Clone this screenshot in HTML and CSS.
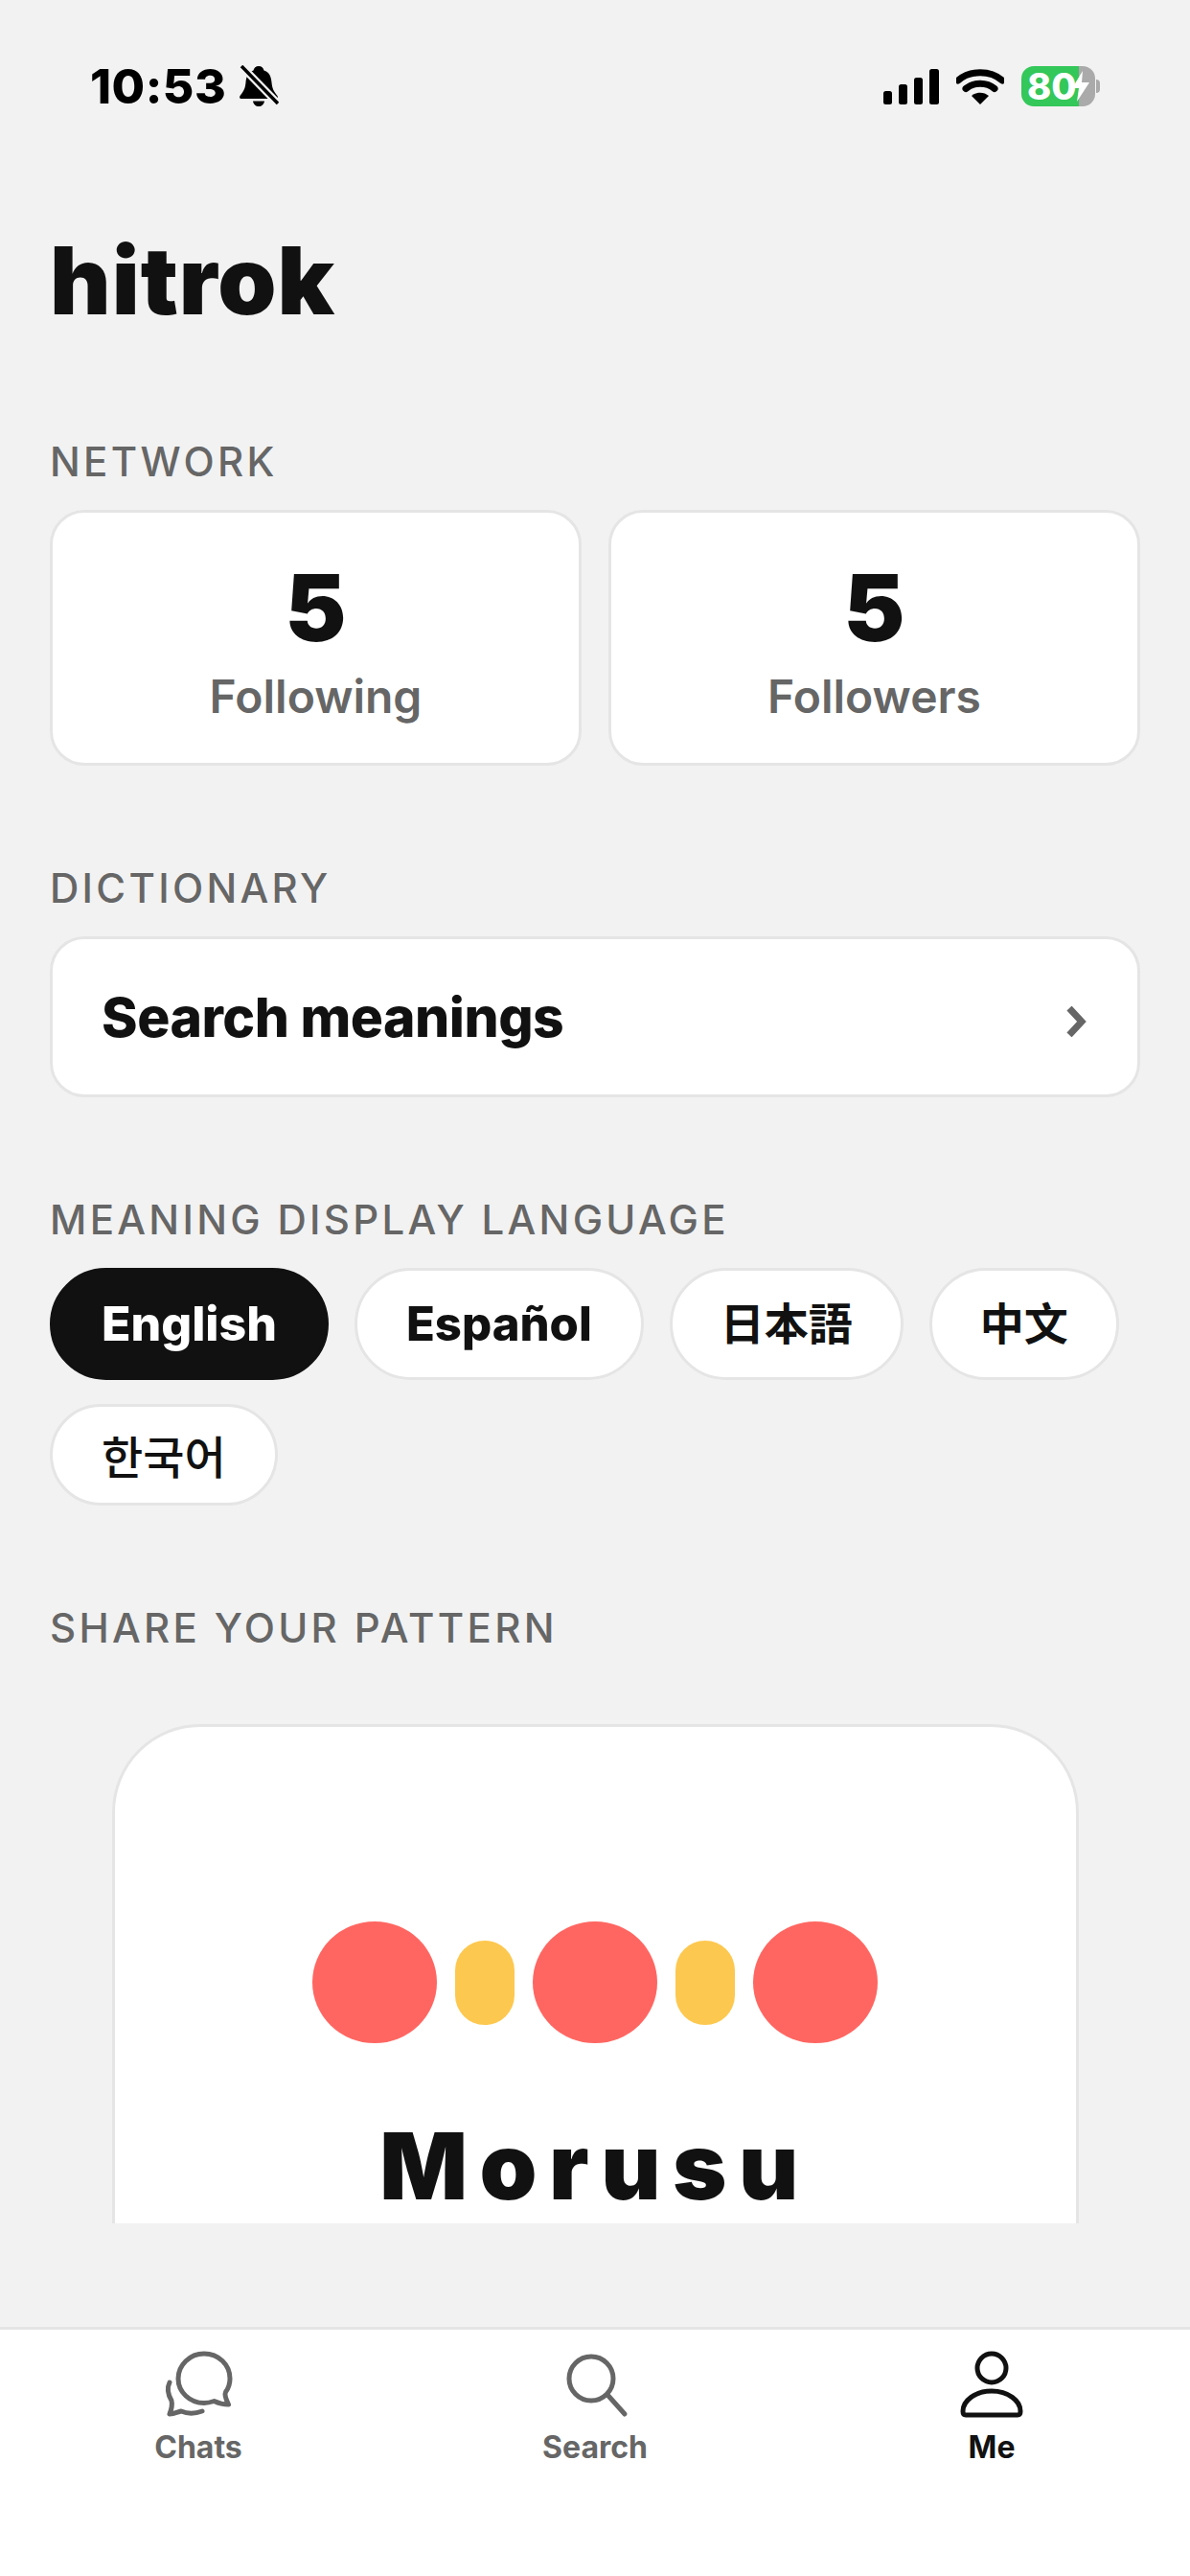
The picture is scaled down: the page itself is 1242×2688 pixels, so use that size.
FILE: index.html
```html
<!DOCTYPE html>
<html lang="en">
<head>
    <meta charset="UTF-8">
    <meta name="viewport" content="width=device-width, initial-scale=1.0">
    <title>hitrok</title>
    <link rel="stylesheet" href="styles.css">
</head>
<body>
    <div class="page">
        <div class="content">
            <div class="status-bar">
                <div class="status-left">
                    <span class="time">10:53</span>
                    <svg class="bell" width="42" height="44" viewBox="0 0 42 44">
                        <path d="M21 1c3 0 5 2 5.500 4.500C32 7 34 12 34.500 18c.5 6 2 9 6 14 1 2 0 3-2 3H3.500c-2 0-3-1-2-3 4-5 5.500-8 6-14C8 12 10 7 15.500 5.500 16 3 18 1 21 1z" fill="#000"/>
                        <path d="M15 37.500h12c-.5 3.500-3 5.500-6 5.500s-5.500-2-6-5.500z" fill="#000"/>
                        <path d="M2 0L42 41" stroke="#f2f2f2" stroke-width="8"/>
                        <path d="M3 1L41 40" stroke="#000" stroke-width="3.500"/>
                    </svg>
                </div>
                <div class="status-right">
                    <svg width="58" height="37" viewBox="0 0 58 37">
                        <rect x="0" y="23" width="9" height="14" rx="2.500" fill="#000"/>
                        <rect x="16" y="16" width="9" height="21" rx="2.500" fill="#000"/>
                        <rect x="32" y="9" width="9" height="28" rx="2.500" fill="#000"/>
                        <rect x="48" y="0" width="10" height="37" rx="2.500" fill="#000"/>
                    </svg>
                    <svg width="50" height="37" viewBox="0 0 50 37">
                        <path d="M2 12C14 1 36 1 48 12" fill="none" stroke="#000" stroke-width="7" stroke-linecap="round"/>
                        <path d="M10 20.500C18 13.500 32 13.500 40 20.500" fill="none" stroke="#000" stroke-width="7" stroke-linecap="round"/>
                        <path d="M16 28c5-4.500 13-4.500 18 0L25 37z" fill="#000"/>
                    </svg>
                    <div class="battery">
                        <div class="battery-body">
                            <span class="battery-text">80</span>
                            <svg class="battery-bolt" width="18" height="32" viewBox="0 0 18 32">
                                <path d="M11 0L0 18h7L5 32 18 12h-8z" fill="#fff"/>
                            </svg>
                        </div>
                        <div class="battery-nub"></div>
                    </div>
                </div>
            </div>

            <h1 class="title">hitrok</h1>

            <section class="section">
                <h2 class="section-label">NETWORK</h2>
                <div class="stats">
                    <div class="card stat">
                        <div class="stat-number">5</div>
                        <div class="stat-label">Following</div>
                    </div>
                    <div class="card stat">
                        <div class="stat-number">5</div>
                        <div class="stat-label">Followers</div>
                    </div>
                </div>
            </section>

            <section class="section">
                <h2 class="section-label">DICTIONARY</h2>
                <div class="card link-row">
                    <span class="link-text">Search meanings</span>
                    <svg class="chevron" width="24" height="32" viewBox="0 0 24 32">
                        <path d="M4 2L17 16 4 30" fill="none" stroke="#666" stroke-width="7"/>
                    </svg>
                </div>
            </section>

            <section class="section">
                <h2 class="section-label">MEANING DISPLAY LANGUAGE</h2>
                <div class="pills">
                    <div class="pill pill-active">English</div>
                    <div class="pill">Español</div>
                    <div class="pill pill-cjk" lang="ja">日本語</div>
                    <div class="pill pill-cjk" lang="zh">中文</div>
                    <div class="pill pill-ko" lang="ko">한국어</div>
                </div>
            </section>

            <section class="section">
                <h2 class="section-label">SHARE YOUR PATTERN</h2>
                <div class="share-card">
                    <div class="pattern">
                        <div class="dot"></div>
                        <div class="dash"></div>
                        <div class="dot"></div>
                        <div class="dash"></div>
                        <div class="dot"></div>
                    </div>
                    <div class="brand">Morusu</div>
                </div>
            </section>
        </div>

        <nav class="tabbar">
            <div class="tab">
                <svg width="100" height="100" viewBox="0 0 100 100">
                    <g transform="translate(3 0)">
                        <path d="M53 16c15 0 27 11.500 27 26 0 5-1.500 10-4.500 14-1 2 0 7 3 13-6 0-11-1.500-15-3.500-3 1-6.500 2-10.500 2-15 0-27-11.500-27-25.500S38 16 53 16z" fill="none" stroke="#666" stroke-width="5" stroke-linejoin="round"/>
                        <path d="M17 46c-3 6-2 12 2 19 1 4 0 9-2 14 5 0 8-2 12-3 7 3 14 3 22 0" fill="none" stroke="#666" stroke-width="5" stroke-linecap="round" stroke-linejoin="round"/>
                    </g>
                </svg>
                <span class="tab-label">Chats</span>
            </div>
            <div class="tab">
                <svg width="100" height="100" viewBox="0 0 100 100">
                    <circle cx="46" cy="42" r="23" fill="none" stroke="#666" stroke-width="5"/>
                    <path d="M64 60L81 79" fill="none" stroke="#666" stroke-width="5" stroke-linecap="round"/>
                </svg>
                <span class="tab-label">Search</span>
            </div>
            <div class="tab tab-active">
                <svg width="100" height="100" viewBox="0 0 100 100">
                    <ellipse cx="50" cy="31" rx="15" ry="15" fill="none" stroke="#111" stroke-width="5"/>
                    <path d="M20 76c0-11 13-21 30-21s30 10 30 21c0 3-1 4-3 4H23c-2 0-3-1-3-4z" fill="none" stroke="#111" stroke-width="5" stroke-linejoin="round"/>
                </svg>
                <span class="tab-label">Me</span>
            </div>
        </nav>
    </div>
</body>
</html>
```

FILE: styles.css
```css
* {
    box-sizing: border-box;
}

body {
    margin: 0;
    background-color: #f2f2f2;
    color: #111;
    font-family: 'Inter', 'Noto Sans CJK JP', sans-serif;
}

.page {
    display: flex;
    flex-direction: column;
    height: 2688px;
    overflow: hidden;
}

.content {
    flex: none;
    height: 2320px;
    overflow: hidden;
    padding: 0 52px;
}

.status-bar {
    display: flex;
    justify-content: space-between;
    align-items: center;
    height: 44px;
    margin-top: 68px;
    padding: 0 42px;
}

.status-left {
    display: flex;
    align-items: center;
    gap: 13px;
}

.status-right {
    display: flex;
    align-items: center;
    gap: 18px;
}

.time {
    font-size: 50px;
    font-weight: 800;
    line-height: 44px;
    letter-spacing: 0.5px;
    color: #000;
}

.battery {
    display: flex;
    align-items: center;
    gap: 1px;
}

.battery-body {
    display: flex;
    align-items: center;
    width: 77px;
    height: 42px;
    border-radius: 13px;
    padding-left: 6px;
    background: linear-gradient(to right, #34c759 60px, #aaa 60px);
}

.battery-text {
    color: #fff;
    font-size: 38px;
    font-weight: 800;
    line-height: 42px;
    width: 46px;
}

.battery-bolt {
    flex: none;
    margin-left: 1px;
}

.battery-nub {
    width: 4px;
    height: 14px;
    border-radius: 0 4px 4px 0;
    background-color: #aaa;
}

.title {
    margin: 126px 0 0;
    font-size: 98px;
    font-weight: 900;
    line-height: 110px;
    letter-spacing: 1px;
}

.section {
    margin-top: 104px;
}

.title + .section {
    margin-top: 110px;
}

.section-label {
    margin: 0 0 26px;
    font-size: 42px;
    font-weight: 500;
    line-height: 48px;
    letter-spacing: 3.3px;
    color: #666;
}

.card {
    background-color: #fff;
    border: 3px solid #e5e5e5;
    border-radius: 36px;
}

.stats {
    display: grid;
    grid-template-columns: 1fr 1fr;
    gap: 28px;
}

.stat {
    display: flex;
    flex-direction: column;
    align-items: center;
    height: 267px;
    padding-top: 47px;
}

.stat-number {
    font-size: 96px;
    font-weight: 900;
    line-height: 104px;
}

.stat-label {
    margin-top: 11px;
    font-size: 48px;
    font-weight: 600;
    line-height: 60px;
    color: #666;
}

.link-row {
    display: flex;
    justify-content: space-between;
    align-items: center;
    height: 168px;
    padding: 0 51px;
}

.chevron {
    margin-top: 10px;
}

.link-text {
    font-size: 57px;
    font-weight: 800;
    letter-spacing: -0.5px;
}

.pills {
    display: flex;
    flex-wrap: wrap;
    gap: 25px 27px;
}

.pill {
    padding: 0 51px;
    background-color: #fff;
    border: 3px solid #e5e5e5;
    border-radius: 60px;
    font-size: 49px;
    font-weight: 800;
    line-height: 111px;
}

.pill-active {
    background-color: #111;
    border-color: #111;
    color: #fff;
    font-size: 50px;
}

.pill-cjk {
    padding: 0 50px;
    font-size: 46px;
    font-weight: 700;
}

.pill-ko {
    font-family: 'Noto Sans CJK KR', sans-serif;
    font-weight: 500;
    font-size: 47px;
    line-height: 100px;
}

.share-card {
    width: 1009px;
    height: 700px;
    margin: 76px auto 0;
    padding-top: 203px;
    background-color: #fff;
    border: 3px solid #e5e5e5;
    border-radius: 92px;
}

.pattern {
    display: flex;
    justify-content: center;
    align-items: center;
    gap: 19px;
}

.dot {
    width: 130px;
    height: 127px;
    border-radius: 50%;
    background-color: #ff6661;
}

.dash {
    width: 62px;
    height: 88px;
    border-radius: 31px;
    background-color: #fdc84f;
}

.brand {
    margin-top: 70px;
    text-align: center;
    font-size: 96px;
    font-weight: 900;
    line-height: 116px;
    letter-spacing: 12.5px;
}

.tabbar {
    flex: none;
    display: grid;
    grid-template-columns: 1fr 1fr 1fr;
    margin-top: auto;
    height: 260px;
    padding-top: 9px;
    background-color: #fff;
    border-top: 3px solid #e5e5e5;
}

.tab {
    display: flex;
    flex-direction: column;
    align-items: center;
    color: #666;
}

.tab-label {
    margin-top: -6px;
    font-size: 32px;
    font-weight: 700;
    line-height: 40px;
}

.tab-active {
    color: #111;
}
```
